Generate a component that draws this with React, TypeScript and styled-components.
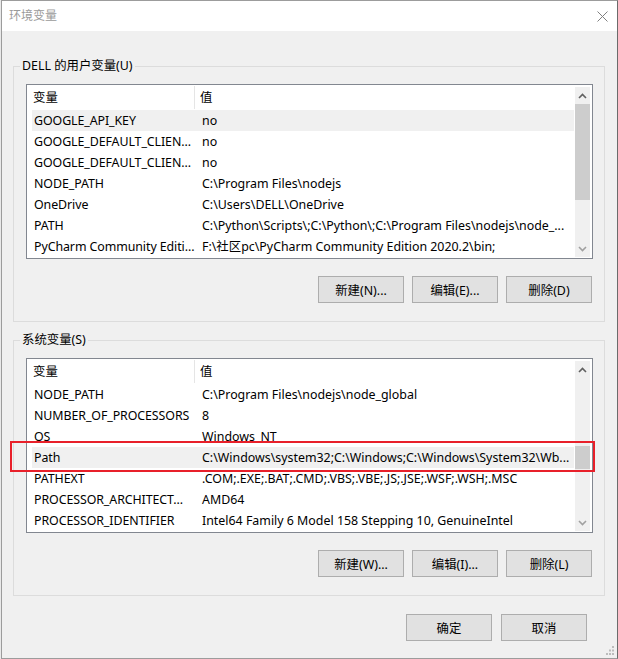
import React from "react";
import styled, { createGlobalStyle } from "styled-components";

const GlobalStyle = createGlobalStyle`
  html, body { margin: 0; padding: 0; background: #e9e9e9; }
  body {
    font-family: "Noto Sans", "Noto Sans CJK SC", sans-serif;
    font-size: 12.4px;
    color: #000;
  }
  * { box-sizing: border-box; }
`;

const Window = styled.div`
  position: relative;
  margin-left: 1px;
  width: 617px;
  height: 659px;
  border: 1px solid #9c9c9c;
  border-right-color: #6b6b6b;
  background: #f0f0f0;
  display: flex;
  flex-direction: column;
  overflow: hidden;
`;

const TitleBar = styled.div`
  height: 30px;
  flex: none;
  background: #fff;
  display: flex;
  align-items: center;
  justify-content: space-between;
  padding: 0 9px 0 7px;
`;

const Title = styled.span`
  color: #9a9a9a;
  font-size: 12px;
  line-height: 16px;
`;

const CloseIcon = styled.svg`
  width: 11px;
  height: 11px;
  display: block;
`;

const Body = styled.div`
  padding: 27px 12px 0 11px;
  display: flex;
  flex-direction: column;
`;

const Group = styled.fieldset`
  margin: 0;
  min-width: 0;
  padding: 10px 12px 18px 12px;
  border: 1px solid #dcdcdc;
  & + & { margin-top: 10px; }
`;

const Legend = styled.legend`
  padding: 0 2px;
  margin-left: -6px;
  font-size: 12.4px;
  line-height: 16px;
`;

const ListView = styled.div`
  height: 175px;
  margin-right: -1px;
  border: 1px solid #828790;
  background: #fff;
  display: flex;
`;

const ListBody = styled.div`
  flex: 1;
  min-width: 0;
  display: flex;
  flex-direction: column;
`;

const Header = styled.div`
  height: 25px;
  display: flex;
  align-items: center;
`;

const HeaderCell = styled.div<{ $w?: number }>`
  height: 23px;
  line-height: 23px;
  white-space: nowrap;
  ${(p) =>
    p.$w
      ? `width: ${p.$w}px; flex: none; padding-left: 6px; border-right: 1px solid #e5e5e5;`
      : `flex: 1; padding-left: 5px;`}
`;

const Row = styled.div<{ $selected?: boolean }>`
  position: relative;
  display: flex;
  height: 21px;
  line-height: 21px;
  margin: 0 1px 0 5px;
  white-space: nowrap;
  background: ${(p) => (p.$selected ? "#f0f0f0" : "transparent")};
`;

const NameCell = styled.div`
  width: 163px;
  flex: none;
  padding-left: 2px;
  letter-spacing: -0.08px;
`;

const ValueCell = styled.div`
  flex: 1;
  min-width: 0;
  padding-left: 7px;
  overflow: hidden;
`;

const Annotation = styled.div`
  position: absolute;
  left: -22px;
  right: -21px;
  top: -6px;
  bottom: -4px;
  border: 2px solid #e8202a;
  pointer-events: none;
`;

const Scrollbar = styled.div`
  width: 15px;
  flex: none;
  margin: 2px 2px 1px 0;
  background: #f0f0f0;
  display: flex;
  flex-direction: column;
`;

const ArrowButton = styled.div`
  height: 17px;
  flex: none;
  display: flex;
  align-items: center;
  justify-content: center;
`;

const Track = styled.div`
  flex: 1;
  display: flex;
  flex-direction: column;
`;

const Thumb = styled.div<{ $offset: number; $size: number }>`
  margin-top: ${(p) => p.$offset}px;
  height: ${(p) => p.$size}px;
  background: #cdcdcd;
`;

const ButtonRow = styled.div`
  display: flex;
  justify-content: flex-end;
  gap: 8px;
  margin-top: 17px;
`;

const Button = styled.button`
  width: 86px;
  height: 27px;
  padding: 0;
  border: 1px solid #adadad;
  background: #e1e1e1;
  font-family: inherit;
  font-size: 12.4px;
  color: #000;
`;

const Footer = styled.div`
  display: flex;
  justify-content: flex-end;
  gap: 9px;
  padding: 18px 30px 0 0;
`;

const Grip = styled.svg`
  position: absolute;
  right: 2px;
  bottom: 2px;
  width: 10px;
  height: 10px;
`;

const Arrow = ({ up, color }: { up?: boolean; color: string }) => (
  <svg width="9" height="6" viewBox="0 0 9 6">
    <polyline
      points={up ? "1,5 4.5,1.5 8,5" : "1,1 4.5,4.5 8,1"}
      fill="none"
      stroke={color}
      strokeWidth="1.6"
    />
  </svg>
);

type Item = { name: string; value: string; selected?: boolean; marked?: boolean };

const userVars: Item[] = [
  { name: "GOOGLE_API_KEY", value: "no", selected: true },
  { name: "GOOGLE_DEFAULT_CLIEN...", value: "no" },
  { name: "GOOGLE_DEFAULT_CLIEN...", value: "no" },
  { name: "NODE_PATH", value: "C:\\Program Files\\nodejs" },
  { name: "OneDrive", value: "C:\\Users\\DELL\\OneDrive" },
  { name: "PATH", value: "C:\\Python\\Scripts\\;C:\\Python\\;C:\\Program Files\\nodejs\\node_..." },
  { name: "PyCharm Community Editi...", value: "F:\\社区pc\\PyCharm Community Edition 2020.2\\bin;" },
];

const sysVars: Item[] = [
  { name: "NODE_PATH", value: "C:\\Program Files\\nodejs\\node_global" },
  { name: "NUMBER_OF_PROCESSORS", value: "8" },
  { name: "OS", value: "Windows_NT" },
  { name: "Path", value: "C:\\Windows\\system32;C:\\Windows;C:\\Windows\\System32\\Wb...", selected: true, marked: true },
  { name: "PATHEXT", value: ".COM;.EXE;.BAT;.CMD;.VBS;.VBE;.JS;.JSE;.WSF;.WSH;.MSC" },
  { name: "PROCESSOR_ARCHITECT...", value: "AMD64" },
  { name: "PROCESSOR_IDENTIFIER", value: "Intel64 Family 6 Model 158 Stepping 10, GenuineIntel" },
];

const VarList = ({ items, thumb }: { items: Item[]; thumb: [number, number] }) => (
  <ListView>
    <ListBody>
      <Header>
        <HeaderCell $w={168}>变量</HeaderCell>
        <HeaderCell>值</HeaderCell>
      </Header>
      {items.map((it, i) => (
        <Row key={i} $selected={it.selected}>
          <NameCell>{it.name}</NameCell>
          <ValueCell>{it.value}</ValueCell>
          {it.marked && <Annotation />}
        </Row>
      ))}
    </ListBody>
    <Scrollbar>
      <ArrowButton>
        <Arrow up color="#606060" />
      </ArrowButton>
      <Track>
        <Thumb $offset={thumb[0]} $size={thumb[1]} />
      </Track>
      <ArrowButton>
        <Arrow color="#a0a0a0" />
      </ArrowButton>
    </Scrollbar>
  </ListView>
);

export default function App() {
  return (
    <>
      <GlobalStyle />
      <Window>
        <TitleBar>
          <Title>环境变量</Title>
          <CloseIcon viewBox="0 0 11 11">
            <line x1="0.5" y1="0.5" x2="10.5" y2="10.5" stroke="#808080" strokeWidth="1" />
            <line x1="10.5" y1="0.5" x2="0.5" y2="10.5" stroke="#808080" strokeWidth="1" />
          </CloseIcon>
        </TitleBar>
        <Body>
          <Group>
            <Legend>DELL 的用户变量(U)</Legend>
            <VarList items={userVars} thumb={[0, 96]} />
            <ButtonRow>
              <Button>新建(N)...</Button>
              <Button>编辑(E)...</Button>
              <Button>删除(D)</Button>
            </ButtonRow>
          </Group>
          <Group>
            <Legend>系统变量(S)</Legend>
            <VarList items={sysVars} thumb={[68, 23]} />
            <ButtonRow>
              <Button>新建(W)...</Button>
              <Button>编辑(I)...</Button>
              <Button>删除(L)</Button>
            </ButtonRow>
          </Group>
        </Body>
        <Footer>
          <Button>确定</Button>
          <Button>取消</Button>
        </Footer>
        <Grip viewBox="0 0 10 10">
          <rect x="7" y="0" width="2" height="2" fill="#bcbcbc" />
          <rect x="4" y="3.5" width="2" height="2" fill="#bcbcbc" />
          <rect x="7" y="3.5" width="2" height="2" fill="#bcbcbc" />
          <rect x="1" y="7" width="2" height="2" fill="#bcbcbc" />
          <rect x="4" y="7" width="2" height="2" fill="#bcbcbc" />
          <rect x="7" y="7" width="2" height="2" fill="#bcbcbc" />
        </Grip>
      </Window>
    </>
  );
}
